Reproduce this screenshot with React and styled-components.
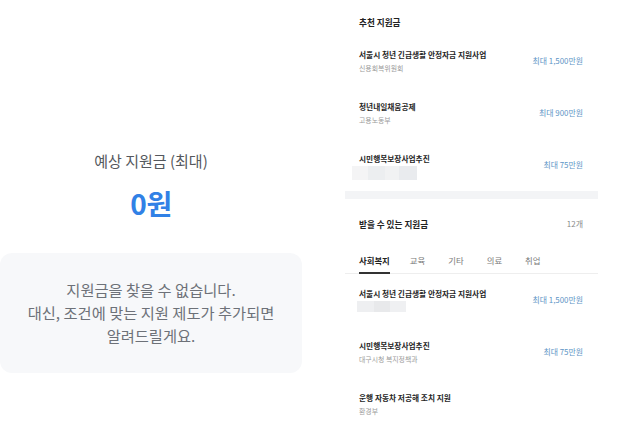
import React from "react";
import styled, { createGlobalStyle } from "styled-components";

const GlobalStyle = createGlobalStyle`
  html, body {
    margin: 0;
    padding: 0;
    background: #ffffff;
  }
  body {
    font-family: "Noto Sans CJK KR", "Noto Sans", sans-serif;
    -webkit-font-smoothing: antialiased;
  }
`;

const Page = styled.div`
  display: flex;
  width: 635px;
  height: 443px;
  overflow: hidden;
`;

/* left: result summary */

const SummaryColumn = styled.div`
  width: 302px;
  padding-top: 151px;
  display: flex;
  flex-direction: column;
  align-items: center;
`;

const SummaryLabel = styled.div`
  font-size: 15px;
  line-height: 20px;
  color: #55585d;
`;

const SummaryAmount = styled.div`
  margin-top: 14px;
  font-size: 28px;
  line-height: 36px;
  font-weight: 700;
  color: #3181e6;
  letter-spacing: -0.5px;
`;

const EmptyBox = styled.div`
  margin-top: 32px;
  width: 100%;
  box-sizing: border-box;
  padding: 25px 0 26px;
  border-radius: 12px;
  background: #f7f8fa;
  text-align: center;
  font-size: 15.3px;
  line-height: 23px;
  color: #6d7178;
`;

/* right: list of grants */

const ListColumn = styled.div`
  margin-left: 43px;
  width: 253px;
  padding-top: 15px;
`;

const SectionHeader = styled.div`
  display: flex;
  justify-content: space-between;
  align-items: center;
  padding: ${p => (p.$top ? `${p.$top}px` : 0)} 15px 0 14px;
`;

const SectionTitle = styled.div`
  font-size: 8.6px;
  line-height: 14px;
  font-weight: 700;
  color: #222;
`;

const Count = styled.div`
  font-size: 8px;
  line-height: 14px;
  color: #8a8a8a;
`;

const List = styled.div`
  margin-top: ${p => p.$gap || 0}px;
`;

const Item = styled.div`
  display: flex;
  justify-content: space-between;
  align-items: center;
  height: 52px;
  box-sizing: border-box;
  padding: 13px 15px 13px 14px;
`;

const ItemText = styled.div`
  display: flex;
  flex-direction: column;
`;

const ItemTitle = styled.div`
  font-size: 7.7px;
  line-height: 13px;
  font-weight: 600;
  color: #262626;
`;

const ItemSub = styled.div`
  margin-top: 1px;
  font-size: 6.9px;
  line-height: 12px;
  color: #9b9b9b;
`;

const Blurred = styled.div`
  width: ${p => p.$w}px;
  height: ${p => p.$h}px;
  margin-left: ${p => p.$shift}px;
  margin-top: 1.5px;
  margin-bottom: ${p => 12 - p.$h}px;
  background: ${p => p.$bg};
`;

const ItemAmount = styled.div`
  font-size: 7.9px;
  line-height: 12px;
  color: #5e95c6;
  white-space: nowrap;
`;

const Band = styled.div`
  height: 8px;
  background: #f3f4f6;
`;

const TabBar = styled.div`
  display: flex;
  gap: 23px;
  margin-top: 23px;
  padding-left: 14px;
  border-bottom: 1px solid #eeeeee;
`;

const Tab = styled.div`
  font-size: 8.4px;
  line-height: 12px;
  padding-bottom: 6px;
  font-weight: ${p => (p.$active ? 600 : 400)};
  color: ${p => (p.$active ? "#222" : "#7a7a7a")};
  border-bottom: 2px solid ${p => (p.$active ? "#333" : "transparent")};
  margin-bottom: -1px;
  margin-right: ${p => (p.$active ? -3 : 0)}px;
`;

const mosaicA =
  "linear-gradient(90deg, #f4f4f5 0 25%, #eceef0 25% 50%, #f1f2f3 50% 72%, #e9ebee 72% 100%)";
const mosaicB =
  "linear-gradient(90deg, #eeeff1 0 34%, #e8e9eb 34% 68%, #eff0f2 68% 100%)";

const recommended = [
  { title: "서울시 청년 긴급생활 안정자금 지원사업", sub: "신용회복위원회", amount: "최대 1,500만원" },
  { title: "청년내일채움공제", sub: "고용노동부", amount: "최대 900만원" },
  { title: "시민행복보장사업추진", blur: { w: 65, h: 14, shift: -7, bg: mosaicA }, amount: "최대 75만원" }
];

const available = [
  { title: "서울시 청년 긴급생활 안정자금 지원사업", blur: { w: 49, h: 11, shift: -2, bg: mosaicB }, amount: "최대 1,500만원" },
  { title: "시민행복보장사업추진", sub: "대구시청 복지정책과", amount: "최대 75만원" },
  { title: "운행 자동차 저공해 조치 지원", sub: "환경부" }
];

const tabs = ["사회복지", "교육", "기타", "의료", "취업"];

const GrantItem = ({ title, sub, blur, amount }) => (
  <Item>
    <ItemText>
      <ItemTitle>{title}</ItemTitle>
      {blur ? (
        <Blurred $w={blur.w} $h={blur.h} $shift={blur.shift} $bg={blur.bg} />
      ) : (
        <ItemSub>{sub}</ItemSub>
      )}
    </ItemText>
    {amount && <ItemAmount>{amount}</ItemAmount>}
  </Item>
);

export default function App() {
  return (
    <>
      <GlobalStyle />
      <Page>
        <SummaryColumn>
          <SummaryLabel>예상 지원금 (최대)</SummaryLabel>
          <SummaryAmount>0원</SummaryAmount>
          <EmptyBox>
            지원금을 찾을 수 없습니다.
            <br />
            대신, 조건에 맞는 지원 제도가 추가되면
            <br />
            알려드릴게요.
          </EmptyBox>
        </SummaryColumn>

        <ListColumn>
          <SectionHeader>
            <SectionTitle>추천 지원금</SectionTitle>
          </SectionHeader>
          <List $gap={6}>
            {recommended.map(item => (
              <GrantItem key={item.title} {...item} />
            ))}
          </List>

          <Band />

          <SectionHeader $top={18}>
            <SectionTitle>받을 수 있는 지원금</SectionTitle>
            <Count>12개</Count>
          </SectionHeader>
          <TabBar>
            {tabs.map((t, i) => (
              <Tab key={t} $active={i === 0}>
                {t}
              </Tab>
            ))}
          </TabBar>
          <List>
            {available.map(item => (
              <GrantItem key={item.title + (item.sub || "")} {...item} />
            ))}
          </List>
        </ListColumn>
      </Page>
    </>
  );
}
